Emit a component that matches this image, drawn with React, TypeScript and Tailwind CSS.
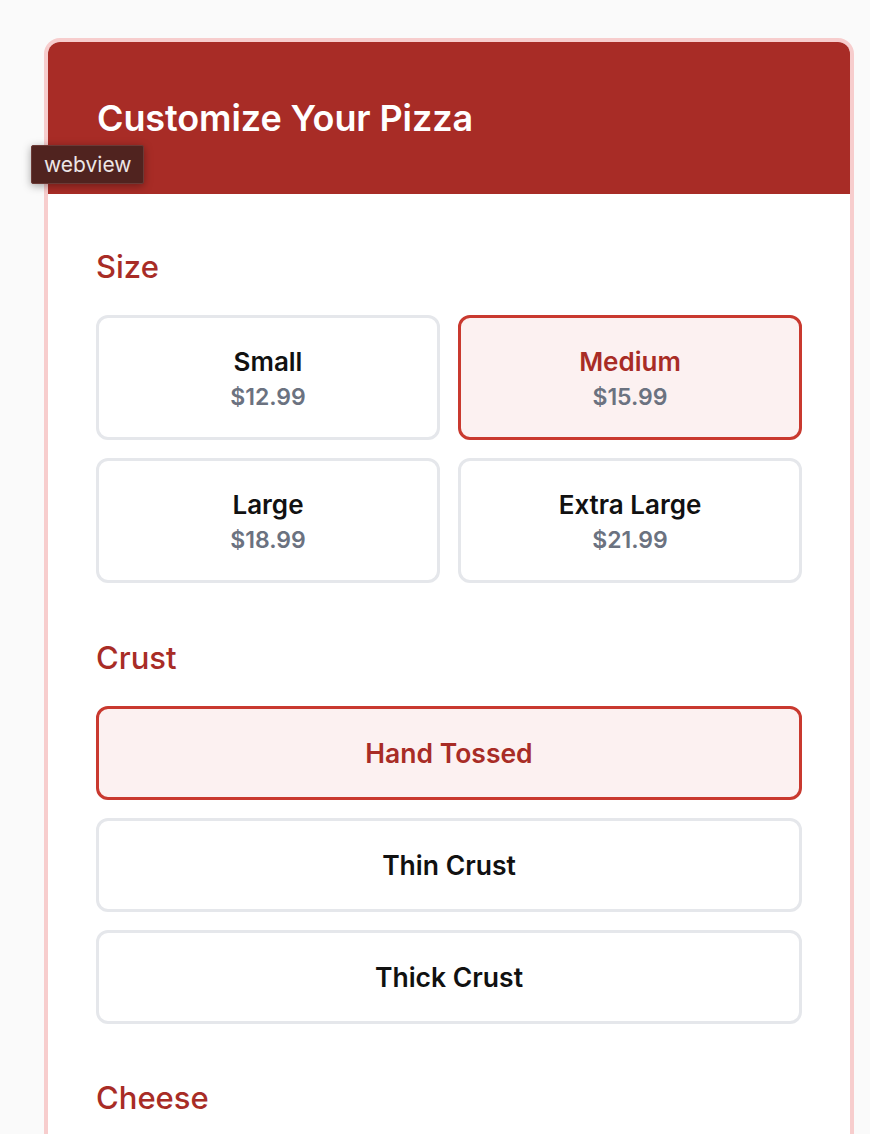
import React, { useState } from "react";

const sizes = [
  { name: "Small", price: "$12.99" },
  { name: "Medium", price: "$15.99" },
  { name: "Large", price: "$18.99" },
  { name: "Extra Large", price: "$21.99" },
];

const crusts = ["Hand Tossed", "Thin Crust", "Thick Crust"];

const SectionTitle = ({ children }: { children: React.ReactNode }) => (
  <h2 className="text-[31px] leading-[36px] font-medium text-[#a82c26] mb-[30px]">
    {children}
  </h2>
);

const App = () => {
  const [size, setSize] = useState("Medium");
  const [crust, setCrust] = useState("Hand Tossed");

  return (
    <div
      className="min-h-screen bg-[#fafafa] pt-[38px] pl-[44px] overflow-hidden"
      style={{ fontFamily: "Inter, 'Noto Sans', sans-serif" }}
    >
      <div className="relative w-[810px] rounded-t-[16px] border-4 border-[#f7cdcd] bg-white overflow-visible">
        <div className="bg-[#a82c26] rounded-t-[12px] px-[49px] py-14">
          <h1 className="text-[36px] leading-[40px] font-semibold text-white tracking-[-0.1px]">
            Customize Your Pizza
          </h1>
        </div>

        {/* tooltip overlay */}
        <div className="absolute left-[-17px] top-[103px] h-[39px] px-[12px] flex items-center bg-[#50231f] border border-[#6b3a36] rounded-[2px] shadow-[0_2px_8px_rgba(0,0,0,0.35)] text-[21px] text-[#ece6e6]">
          webview
        </div>

        <div className="px-12 pt-[55px] pb-10">
          <SectionTitle>Size</SectionTitle>
          <div className="grid grid-cols-2 gap-[18px]">
            {sizes.map((s) => {
              const active = s.name === size;
              return (
                <button
                  key={s.name}
                  onClick={() => setSize(s.name)}
                  className={`${
                    active
                      ? "border-[#c9392f] bg-[#fcf1f1] text-[#a82c26]"
                      : "border-[#e5e7eb] bg-white text-[#111111]"
                  } border-[3px] rounded-[12px] pt-[26px] pb-[23px] flex flex-col items-center`}
                >
                  <span className="text-[26px] leading-[36px] font-semibold">
                    {s.name}
                  </span>
                  <span className="text-[23px] leading-[34px] font-semibold text-[#6b7280]">
                    {s.price}
                  </span>
                </button>
              );
            })}
          </div>

          <div className="mt-[57px]">
            <SectionTitle>Crust</SectionTitle>
            <div className="flex flex-col gap-[18px]">
              {crusts.map((c) => {
                const active = c === crust;
                return (
                  <button
                    key={c}
                    onClick={() => setCrust(c)}
                    className={`${
                      active
                        ? "border-[#c9392f] bg-[#fcf1f1] text-[#a82c26]"
                        : "border-[#e5e7eb] bg-white text-[#111111]"
                    } border-[3px] rounded-[12px] py-[27px] text-[26.5px] leading-[34px] font-semibold text-center`}
                  >
                    {c}
                  </button>
                );
              })}
            </div>
          </div>

          <div className="mt-[56px]">
            <SectionTitle>Cheese</SectionTitle>
            <div className="h-[200px]" />
          </div>
        </div>
      </div>
    </div>
  );
};

export default App;
